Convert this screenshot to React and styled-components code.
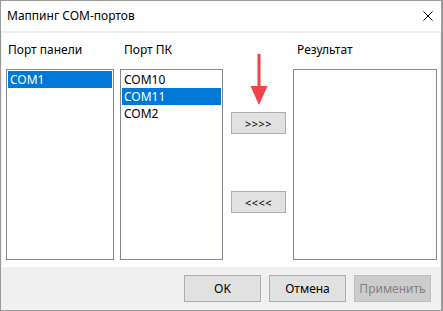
import styled, { createGlobalStyle } from "styled-components";

const GlobalStyle = createGlobalStyle`
  html, body {
    margin: 0;
    padding: 0;
    background: #ffffff;
  }
  body {
    font-family: "Noto Sans", "Liberation Sans", sans-serif;
    font-size: 12px;
    color: #000000;
  }
`;

const Window = styled.div`
  width: 443px;
  height: 311px;
  box-sizing: border-box;
  border: 1px solid #9a9a9a;
  border-right-width: 2px;
  background-color: #f0f0f0;
  display: flex;
  flex-direction: column;
`;

const TitleBar = styled.div`
  height: 30px;
  flex-shrink: 0;
  background-color: #ffffff;
  display: flex;
  align-items: center;
  justify-content: space-between;
  padding: 0 8px 0 6px;
`;

const TitleText = styled.div`
  font-size: 12px;
  line-height: 16px;
`;

const CloseIcon = styled.svg`
  width: 10px;
  height: 10px;
  display: block;
`;

const Panel = styled.div`
  margin: 2px 1px 0 1px;
  height: 234px;
  background-color: #ffffff;
  display: flex;
  flex-direction: row;
  align-items: stretch;
  padding: 9px 3px 7px 4px;
  box-sizing: border-box;
`;

const Column = styled.div`
  width: ${(p) => p.$width}px;
  margin-left: ${(p) => p.$gap || 0}px;
  display: flex;
  flex-direction: column;
`;

const Label = styled.div`
  height: 16px;
  line-height: 16px;
  margin-bottom: 11px;
  padding-left: ${(p) => p.$indent || 0}px;
`;

const ListBox = styled.div`
  flex: 1;
  border: 1px solid #828790;
  background-color: #ffffff;
  padding: 1px;
  display: flex;
  flex-direction: column;
`;

const Item = styled.div`
  height: 17px;
  line-height: 17px;
  padding-left: 2px;
  background-color: ${(p) => (p.$selected ? "#0078d7" : "transparent")};
  color: ${(p) => (p.$selected ? "#ffffff" : "#000000")};
`;

const Middle = styled.div`
  width: 70px;
  display: flex;
  flex-direction: column;
  align-items: flex-start;
  padding-left: 8px;
  box-sizing: border-box;
`;

const Arrow = styled.svg`
  width: 18px;
  height: 51px;
  margin: 12px 0 7px 19px;
  display: block;
`;

const MoveButton = styled.div`
  width: 55px;
  height: 22px;
  box-sizing: border-box;
  border: 1px solid #adadad;
  background-color: #e1e1e1;
  display: flex;
  align-items: center;
  justify-content: center;
  font-size: 11px;
  letter-spacing: 0.5px;
  margin-top: ${(p) => p.$top || 0}px;
`;

const Footer = styled.div`
  flex: 1;
  display: flex;
  flex-direction: row;
  justify-content: flex-end;
  align-items: flex-start;
  gap: 8px;
  padding: 8px 10px 0 0;
`;

const DialogButton = styled.div`
  width: 77px;
  height: 27px;
  box-sizing: border-box;
  border: 1px solid ${(p) => (p.$disabled ? "#bfbfbf" : "#adadad")};
  background-color: ${(p) => (p.$disabled ? "#cccccc" : "#e1e1e1")};
  color: ${(p) => (p.$disabled ? "#838383" : "#000000")};
  display: flex;
  align-items: center;
  justify-content: center;
`;

const panelPorts = [{ name: "COM1", selected: true }];
const pcPorts = [
  { name: "COM10" },
  { name: "COM11", selected: true },
  { name: "COM2" },
];

export default function App() {
  return (
    <>
      <GlobalStyle />
      <Window>
        <TitleBar>
          <TitleText>Маппинг COM-портов</TitleText>
          <CloseIcon viewBox="0 0 10 10">
            <path d="M0.5 0.5 L9.5 9.5 M9.5 0.5 L0.5 9.5" stroke="#000" strokeWidth="1" fill="none" />
          </CloseIcon>
        </TitleBar>
        <Panel>
          <Column $width={108}>
            <Label $indent={2}>Порт панели</Label>
            <ListBox>
              {panelPorts.map((p) => (
                <Item key={p.name} $selected={p.selected}>{p.name}</Item>
              ))}
            </ListBox>
          </Column>
          <Column $width={103} $gap={6}>
            <Label $indent={4}>Порт ПК</Label>
            <ListBox>
              {pcPorts.map((p) => (
                <Item key={p.name} $selected={p.selected}>{p.name}</Item>
              ))}
            </ListBox>
          </Column>
          <Middle>
            <Arrow viewBox="0 0 18 51">
              <rect x="7.5" y="0" width="3" height="34" fill="#f0434b" />
              <polygon points="0.5,32 17.5,32 9,51" fill="#f0434b" />
            </Arrow>
            <MoveButton>&gt;&gt;&gt;&gt;</MoveButton>
            <MoveButton $top={57}>&lt;&lt;&lt;&lt;</MoveButton>
          </Middle>
          <Column $width={144}>
            <Label $indent={4}>Результат</Label>
            <ListBox />
          </Column>
        </Panel>
        <Footer>
          <DialogButton>OK</DialogButton>
          <DialogButton>Отмена</DialogButton>
          <DialogButton $disabled>Применить</DialogButton>
        </Footer>
      </Window>
    </>
  );
}
